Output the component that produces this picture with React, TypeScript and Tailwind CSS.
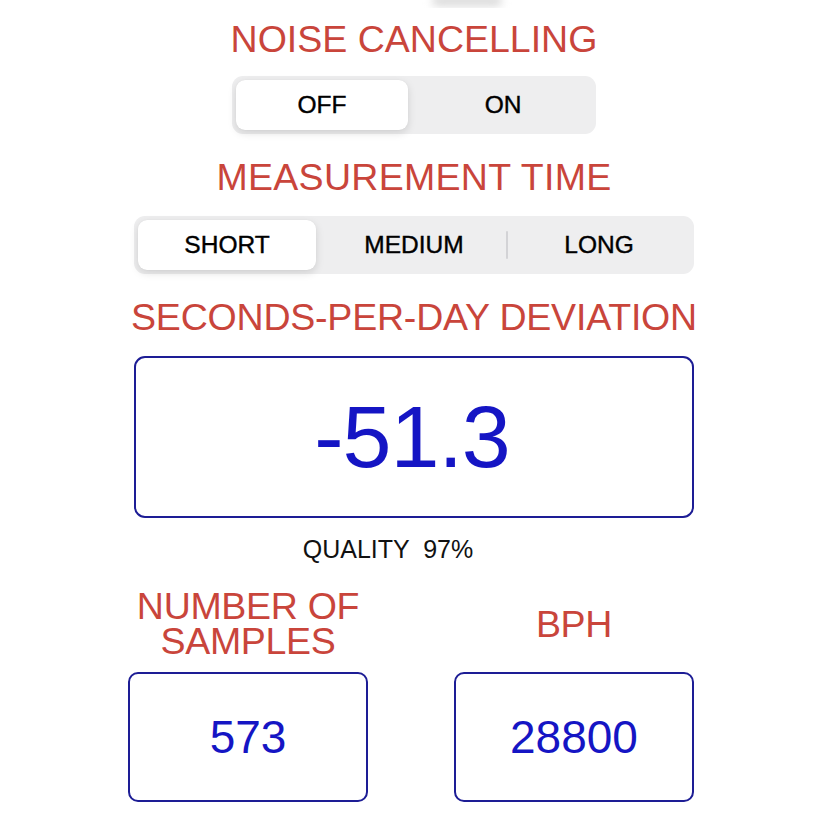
import React from "react";

const red = "text-[#c9453b]";

function Seg({ items, selected, width }: { items: string[]; selected: number; width: string }) {
  return (
    <div className={`${width} h-[58px] rounded-[11px] bg-[#eeeeef] p-[4px] flex`}>
      {items.map((it, i) => (
        <div key={it} className="flex-1 flex items-center relative">
          {i > 0 && i !== selected && i - 1 !== selected && (
            <div className="w-[2px] h-[28px] bg-[#d3d3d6] rounded" />
          )}
          <div
            className={`flex-1 h-full flex items-center justify-center rounded-[9px] text-[24.5px] text-black [-webkit-text-stroke:0.4px_black] ${
              i === selected ? "bg-white shadow-[0_3px_8px_rgba(0,0,0,0.13),0_0_1px_rgba(0,0,0,0.08)] mr-[6px]" : ""
            }`}
          >
            {it}
          </div>
        </div>
      ))}
    </div>
  );
}

function ValueBox({ value }: { value: string }) {
  return (
    <div className="w-[240px] h-[130px] rounded-[10px] border-[2px] border-[#1d1d95] flex items-center justify-center">
      <span className="text-[46px] text-[#1515c4] leading-none">{value}</span>
    </div>
  );
}

export default function App() {
  return (
    <div
      className="w-[828px] h-[831px] bg-white overflow-hidden flex flex-col items-center"
      style={{ fontFamily: '"Liberation Sans", Arial, sans-serif' }}
    >
      <div className="h-[8px] w-full flex justify-center overflow-hidden">
        <div className="w-[70px] h-[10px] -mt-[4px] ml-[106px] rounded-full bg-[#d9d9d9] blur-[4px]" />
      </div>
      <div className={`mt-[9px] h-[44px] leading-[44px] text-[37.5px] tracking-[0px] ${red}`}>NOISE CANCELLING</div>
      <div className="mt-[15px]">
        <Seg items={["OFF", "ON"]} selected={0} width="w-[364px]" />
      </div>
      <div className={`mt-[21px] h-[44px] leading-[44px] text-[37.5px] tracking-[0.3px] ${red}`}>MEASUREMENT TIME</div>
      <div className="mt-[17px]">
        <Seg items={["SHORT", "MEDIUM", "LONG"]} selected={0} width="w-[560px]" />
      </div>
      <div className={`mt-[21px] h-[44px] leading-[44px] text-[37.5px] tracking-[-0.2px] ${red}`}>SECONDS-PER-DAY DEVIATION</div>
      <div className="mt-[17px] w-[560px] h-[162px] rounded-[11px] border-[2px] border-[#1d1d95] flex items-center justify-center">
        <span className="text-[88px] leading-none text-[#1515c4] tracking-[-1px] -ml-[4px]">-51.3</span>
      </div>
      <div className="mt-[18px] h-[26px] leading-[26px] text-[25px] text-[#111] whitespace-pre -ml-[52px]">QUALITY  97%</div>
      <div className="mt-[27px] w-[566px] flex justify-between -ml-[6px]">
        <div className="w-[240px] flex flex-col items-center">
          <div className={`h-[70px] flex flex-col items-center justify-center text-center text-[37.5px] tracking-[-0.3px] ${red}`}>
            <div className="h-[35px] leading-[35px]">NUMBER OF</div>
            <div className="h-[35px] leading-[35px]">SAMPLES</div>
          </div>
          <div className="mt-[13px]">
            <ValueBox value="573" />
          </div>
        </div>
        <div className="w-[240px] flex flex-col items-center">
          <div className={`h-[70px] flex items-center justify-center text-[37.5px] leading-[35px] tracking-[-0.3px] ${red}`}>
            BPH
          </div>
          <div className="mt-[13px]">
            <ValueBox value="28800" />
          </div>
        </div>
      </div>
    </div>
  );
}
